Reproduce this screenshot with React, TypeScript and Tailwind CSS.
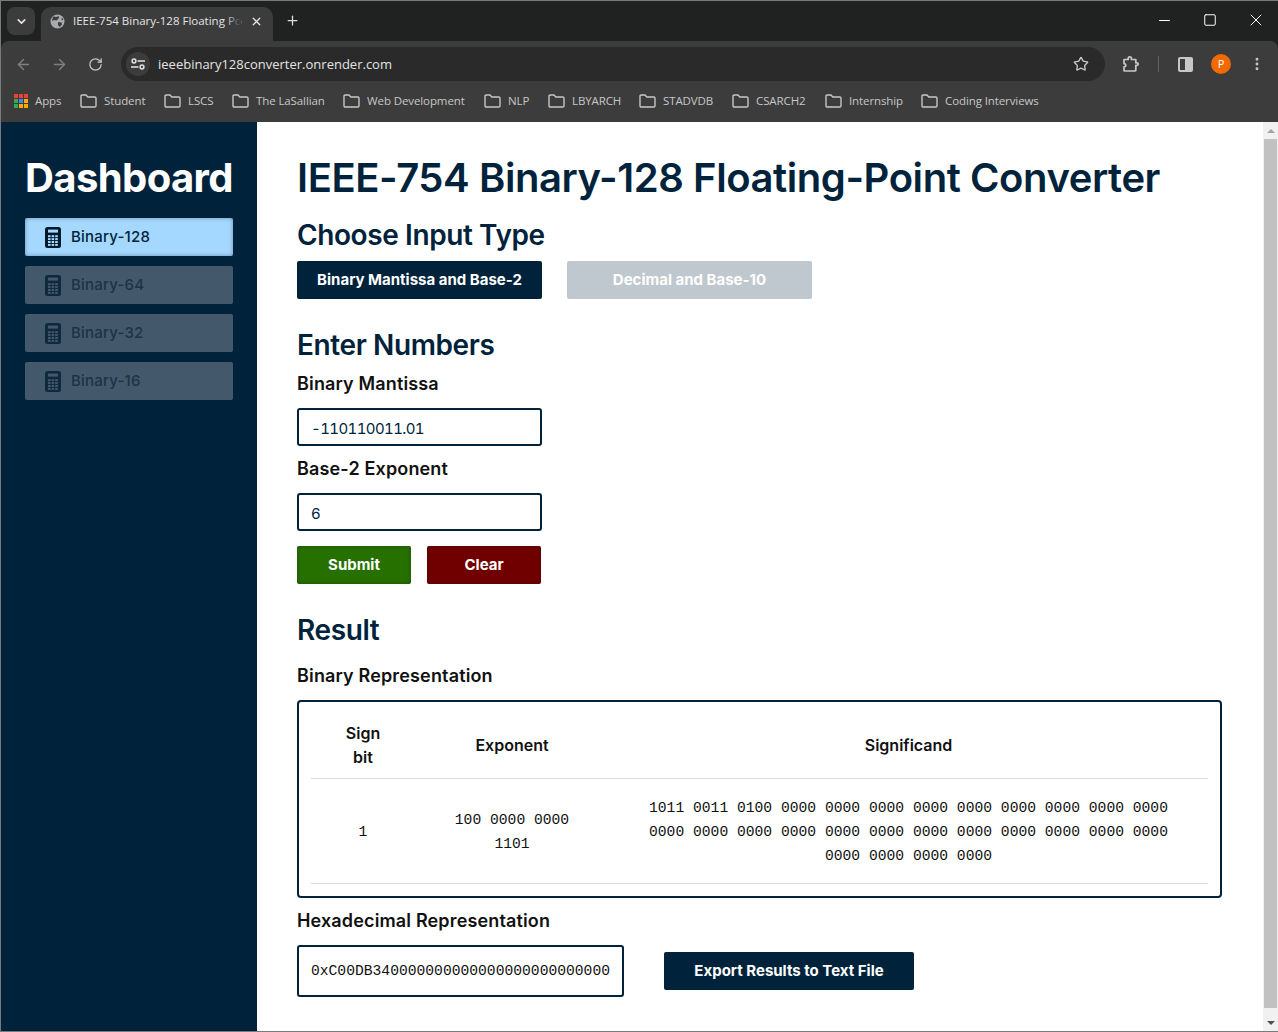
import React from "react";
import { Plus, X, ChevronDown, ArrowLeft, ArrowRight, RotateCw, Star, Minus, Square, MoreVertical } from "lucide-react";

const ui = { fontFamily: '"Open Sans", "Liberation Sans", sans-serif' };
const dm = { fontFamily: 'Inter, "Liberation Sans", sans-serif' };
const mono = { fontFamily: '"Liberation Mono", "DejaVu Sans Mono", monospace' };

function Folder() {
  return (
    <svg width="17" height="14" viewBox="0 0 17 14" fill="none" stroke="#c7c7c7" strokeWidth="1.4" className="shrink-0">
      <path d="M1 2.2C1 1.5 1.5 1 2.2 1H6l1.8 2H14.8C15.5 3 16 3.5 16 4.2V11.8C16 12.5 15.5 13 14.8 13H2.2C1.5 13 1 12.5 1 11.8Z" />
    </svg>
  );
}

function Globe() {
  return (
    <svg width="15" height="15" viewBox="0 0 15 15" className="shrink-0">
      <circle cx="7.5" cy="7.5" r="7" fill="#a8abae" />
      <path d="M3 2.5 L6.5 3 L8.5 2 L9 4 L6.5 6.5 L4 6 L2 7 Z M8 8 L11.5 8.5 L12 10.5 L9.5 13 L8 11 Z M12 3.5 L13.5 6 L11.5 6 Z" fill="#3c3c3c" />
    </svg>
  );
}

function Apps() {
  const c = ["#ea4335", "#ea4335", "#ea4335", "#34a853", "#4285f4", "#f9ab00", "#34a853", "#f9ab00", "#f9ab00"];
  return (
    <div className="grid grid-cols-3 gap-[1px] w-[14px] h-[14px] shrink-0">
      {c.map((x, i) => (
        <div key={i} style={{ backgroundColor: x }} />
      ))}
    </div>
  );
}

function Site() {
  return (
    <svg width="14" height="12" viewBox="0 0 14 12" fill="none" stroke="#e3e3e3" strokeWidth="1.5">
      <circle cx="3" cy="3" r="1.9" />
      <path d="M6.5 3H14M0 9H7.5" />
      <circle cx="11" cy="9" r="1.9" />
    </svg>
  );
}

function Extensions() {
  return (
    <svg width="18" height="18" viewBox="0 0 18 18" fill="none" stroke="#c7c7c7" strokeWidth="1.7" strokeLinejoin="round">
      <path d="M2 4.5H6.2V3.2C6.2 1.4 9.4 1.4 9.4 3.2V4.5H13.8V7.8H15C16.6 7.8 16.6 10.4 15 10.4H13.8V15.2C13.8 15.8 13.4 16 13 16H2.4L2 15.6V11.8C4.4 11.8 4.4 8.6 2 8.6Z" />
    </svg>
  );
}

function Bookmark({ label, w }: { label: string; w: string }) {
  return (
    <div className={"flex items-center gap-[7px] text-[11.5px] tracking-[-0.1px] text-[#c7c7c7] " + w}>
      <Folder />
      <span className="whitespace-nowrap">{label}</span>
    </div>
  );
}

function Chrome() {
  return (
    <div style={ui} className="shrink-0">
      <div className="h-[40px] bg-[#202221] flex items-end pl-[6px] relative">
        <div className="w-[28px] h-[28px] rounded-[8px] bg-[#3c3c3c] flex items-center justify-center mb-[6px]">
          <ChevronDown size={13} color="#e3e3e3" strokeWidth={3} />
        </div>
        <div className="ml-[6px] w-[232px] h-[34px] bg-[#3c3c3c] rounded-t-[10px] flex items-center pl-[9px] pr-[9px] pb-[6px] gap-[8px]">
          <Globe />
          <div className="relative w-[168px]">
            <span className="block text-[11.5px] leading-[16px] text-[#e3e3e3] whitespace-nowrap">IEEE-754 Binary-128 Floating Po</span>
            <div className="absolute right-0 top-0 h-full w-[16px] bg-gradient-to-r from-transparent to-[#3c3c3c]" />
          </div>
          <X size={13} color="#e3e3e3" strokeWidth={2.4} className="ml-[1px]" />
        </div>
        <div className="ml-[11px] mb-[8px] w-[16px] h-[26px] flex items-center justify-center">
          <Plus size={15} color="#dcdcdc" strokeWidth={2} />
        </div>
        <div className="ml-auto flex items-center h-[40px] pr-[12px] pb-[2px]">
          <Minus size={17} color="#fff" strokeWidth={1.4} />
          <Square size={14} color="#fff" strokeWidth={1.7} className="ml-[30px]" />
          <X size={20} color="#fff" strokeWidth={1.2} className="ml-[29px]" />
        </div>
      </div>
      <div className="h-[41px] bg-[#3c3c3c] flex items-center rounded-tl-[8px] rounded-tr-[8px] pl-[14px] pr-[12px] pt-[5px]">
        <ArrowLeft size={17} color="#7e7f80" strokeWidth={2} />
        <ArrowRight size={17} color="#7e7f80" strokeWidth={2} className="ml-[19px]" />
        <RotateCw size={15} color="#c7c7c7" strokeWidth={2} className="ml-[20px]" />
        <div className="ml-[18px] h-[34px] w-[984px] bg-[#2a2a2a] rounded-full flex items-center pl-[5px] pr-[16px]">
          <div className="w-[24px] h-[24px] rounded-full bg-[#3c3c3c] flex items-center justify-center">
            <Site />
          </div>
          <span className="ml-[8px] text-[13px] text-[#e3e3e3] pt-[2px]">ieeebinary128converter.onrender.com</span>
          <Star size={16} color="#c7c7c7" strokeWidth={2} className="ml-auto" />
        </div>
        <div className="ml-[17px]"><Extensions /></div>
        <div className="ml-[18px] w-[1px] h-[16px] bg-[#5f6060]" />
        <div className="ml-[19px] w-[15px] h-[15px] rounded-[2px] border-[2px] border-[#c7c7c7] flex justify-end">
          <div className="w-[6px] bg-[#c7c7c7]" />
        </div>
        <div className="ml-[18px] w-[20px] h-[20px] rounded-full bg-[#f16a00] text-white text-[11px] flex items-center justify-center">P</div>
        <MoreVertical size={16} color="#c7c7c7" strokeWidth={2.4} className="ml-[18px]" />
      </div>
      <div className="h-[40px] bg-[#3c3c3c] flex items-center pl-[13px] pb-[2px]">
        <div className="flex items-center gap-[7px] text-[11.5px] tracking-[-0.1px] text-[#c7c7c7] w-[66px]">
          <Apps />
          <span>Apps</span>
        </div>
        <Bookmark label="Student" w="w-[84px]" />
        <Bookmark label="LSCS" w="w-[68px]" />
        <Bookmark label="The LaSallian" w="w-[111px]" />
        <Bookmark label="Web Development" w="w-[141px]" />
        <Bookmark label="NLP" w="w-[64px]" />
        <Bookmark label="LBYARCH" w="w-[91px]" />
        <Bookmark label="STADVDB" w="w-[93px]" />
        <Bookmark label="CSARCH2" w="w-[93px]" />
        <Bookmark label="Internship" w="w-[96px]" />
        <Bookmark label="Coding Interviews" w="w-[130px]" />
      </div>
    </div>
  );
}

function Calculator({ color, hole }: { color: string; hole: string }) {
  const keys: React.ReactNode[] = [];
  for (let r = 0; r < 4; r++) {
    for (let c = 0; c < 3; c++) {
      keys.push(<rect key={r + "-" + c} x={3 + c * 3.6} y={8.2 + r * 2.9} width="2.6" height="2" fill={hole} />);
    }
  }
  return (
    <svg width="16" height="21" viewBox="0 0 16 21" className="shrink-0">
      <rect width="16" height="21" rx="2.5" fill={color} />
      <rect x="3" y="2.6" width="10" height="3" fill={hole} />
      {keys}
    </svg>
  );
}

function NavItem({ label, active }: { label: string; active?: boolean }) {
  return (
    <div
      className={
        "h-[38px] rounded-[2px] flex items-center pl-[20px] gap-[10px] text-[15px] tracking-[0.2px] font-medium " +
        (active ? "bg-[#a5d8ff] text-[#00233b] shadow-[inset_0_0_4px_rgba(0,0,0,0.35)]" : "bg-[#43596b] text-[#1c3347]")
      }
    >
      <Calculator color={active ? "#00192b" : "#0f2a3f"} hole={active ? "#a5d8ff" : "#43596b"} />
      <span className="pt-[1px]">{label}</span>
    </div>
  );
}

function Sidebar() {
  return (
    <aside className="w-[256px] shrink-0 bg-[#00233b] px-[24px]">
      <h2 className="mt-[31px] h-[50px] flex items-center justify-center text-white text-[40px] leading-[50px] font-bold tracking-[-0.6px] whitespace-nowrap">Dashboard</h2>
      <div className="mt-[15px] flex flex-col gap-[10px]">
        <NavItem label="Binary-128" active />
        <NavItem label="Binary-64" />
        <NavItem label="Binary-32" />
        <NavItem label="Binary-16" />
      </div>
    </aside>
  );
}

function Field({ value }: { value: string }) {
  return (
    <div className="mt-[12px] w-[245px] h-[38px] border-2 border-[#00233b] rounded-[3px] flex items-center px-[12px] pt-[4px] text-[15px] tracking-[-0.6px] tabular-nums text-[#00233b]">{value}</div>
  );
}

function ResultTable() {
  const th = "font-semibold text-[16px] text-[#111] align-middle";
  const td = "text-[14.67px] text-[#111] text-center align-middle pt-[2px]";
  return (
    <div className="mt-[12px] w-[925px] h-[198px] border-2 border-[#00233b] rounded-[4px] px-[12px] pt-[12px]">
      <table className="w-[897px] table-fixed border-collapse">
        <tbody>
          <tr className="h-[64px] border-b border-[#dcdcdc]">
            <th className={th + " w-[104px] leading-[24px] px-[30px] pb-[1px]"}>Sign bit</th>
            <th className={th + " w-[194px] pb-[1px]"}>Exponent</th>
            <th className={th + " pb-[1px]"}>Significand</th>
          </tr>
          <tr className="h-[105px] border-b border-[#dcdcdc] leading-[24px]" style={mono}>
            <td className={td}>1</td>
            <td className={td + " px-[32px]"}>100 0000 0000 1101</td>
            <td className={td + " px-[38px]"}>
              1011 0011 0100 0000 0000 0000 0000 0000 0000 0000 0000 0000 0000 0000 0000 0000 0000 0000 0000 0000 0000 0000 0000 0000 0000 0000 0000 0000
            </td>
          </tr>
        </tbody>
      </table>
    </div>
  );
}

function Main() {
  const h2 = "text-[28px] leading-[34px] font-semibold text-[#00233b] tracking-[-0.4px]";
  const h4 = "text-[18px] leading-[24px] font-semibold text-[#111] tracking-[0.15px]";
  const btn = "h-[38px] rounded-[2px] flex items-center justify-center text-[15px] font-bold text-white";
  return (
    <main className="flex-1 pl-[40px] bg-white" style={dm}>
      <h1 className="mt-[32px] text-[40px] leading-[48px] font-semibold text-[#00233b] tracking-[-0.43px] whitespace-nowrap">IEEE-754 Binary-128 Floating-Point Converter</h1>
      <h2 className={h2 + " mt-[16px]"}>Choose Input Type</h2>
      <div className="mt-[9px] flex gap-[25px]">
        <div className={btn + " w-[245px] bg-[#00233b]"}>Binary Mantissa and Base-2</div>
        <div className={btn + " w-[245px] bg-[#bfc8ce]"}>Decimal and Base-10</div>
      </div>
      <h2 className={h2 + " mt-[29px]"}>Enter Numbers</h2>
      <div className={h4 + " mt-[10px]"}>Binary Mantissa</div>
      <Field value="-110110011.01" />
      <div className={h4 + " mt-[11px]"}>Base-2 Exponent</div>
      <Field value="6" />
      <div className="mt-[15px] flex gap-[16px]">
        <div className={btn + " w-[114px] bg-[#267000] shadow-[inset_0_0_4px_rgba(0,0,0,0.3)]"}>Submit</div>
        <div className={btn + " w-[114px] bg-[#700000] shadow-[inset_0_0_4px_rgba(0,0,0,0.3)]"}>Clear</div>
      </div>
      <h2 className={h2 + " mt-[29px]"}>Result</h2>
      <div className={h4 + " mt-[17px]"}>Binary Representation</div>
      <ResultTable />
      <div className={h4 + " mt-[11px]"}>Hexadecimal Representation</div>
      <div className="mt-[12px] flex items-center gap-[40px]">
        <div className="w-[327px] h-[52px] border-2 border-[#00233b] rounded-[3px] flex items-center justify-center text-[14.67px] text-[#111]" style={mono}>0xC00DB340000000000000000000000000</div>
        <div className={btn + " w-[250px] bg-[#00233b]"}>Export Results to Text File</div>
      </div>
    </main>
  );
}

function Scrollbar() {
  return (
    <div className="w-[15px] shrink-0 bg-[#f1f1f1] flex flex-col items-center">
      <div className="h-[17px] flex items-center justify-center">
        <div className="w-0 h-0 border-x-[4px] border-x-transparent border-b-[4px] border-b-[#a3a3a3]" />
      </div>
      <div className="w-[13px] h-[869px] bg-[#c1c1c1]" />
      <div className="mt-auto h-[17px] flex items-center justify-center">
        <div className="w-0 h-0 border-x-[4px] border-x-transparent border-t-[4px] border-t-[#505050]" />
      </div>
    </div>
  );
}

export default function App() {
  return (
    <div className="w-[1278px] h-[1032px] overflow-hidden flex flex-col border-t border-l border-b border-[#7a7a7a] bg-[#202221]">
      <Chrome />
      <div className="flex-1 flex min-h-0" style={dm}>
        <Sidebar />
        <Main />
        <Scrollbar />
      </div>
    </div>
  );
}
